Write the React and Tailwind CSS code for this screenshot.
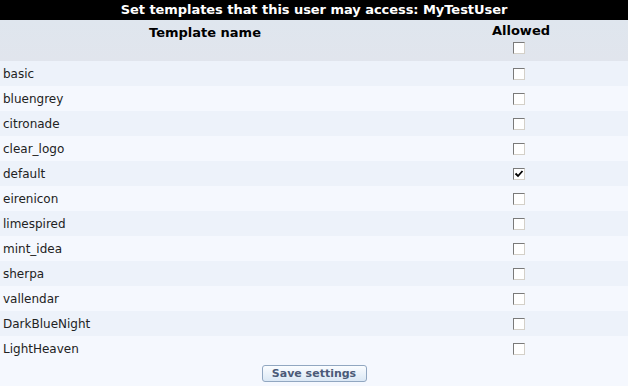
import React, { useState } from 'react';

const templates = [
  'basic',
  'bluengrey',
  'citronade',
  'clear_logo',
  'default',
  'eirenicon',
  'limespired',
  'mint_idea',
  'sherpa',
  'vallendar',
  'DarkBlueNight',
  'LightHeaven',
];

const Box = ({ checked, onClick }) => (
  <span
    onClick={onClick}
    className="relative inline-block w-[12px] h-[12px] bg-white border border-t-[#7a7a7a] border-l-[#7a7a7a] border-r-[#d4d0c8] border-b-[#d4d0c8] cursor-pointer"
  >
    {checked && (
      <svg viewBox="0 0 10 10" className="absolute left-0 top-0 w-[10px] h-[10px]">
        <path d="M1.5 4.5 L4 7 L8.5 2" fill="none" stroke="#000" strokeWidth="1.8" />
      </svg>
    )}
  </span>
);

const App = () => {
  const [allowed, setAllowed] = useState({ default: true });

  const toggle = (name) => setAllowed({ ...allowed, [name]: !allowed[name] });

  return (
    <div className="w-[628px] h-[386px] overflow-hidden bg-[#f5f8fe] text-[#222] font-['DejaVu_Sans',Verdana,sans-serif]">
      {/* Title bar */}
      <div className="h-[20px] bg-black text-white text-[13px] font-bold leading-[20px] text-center tracking-[-0.05px]">
        Set templates that this user may access: MyTestUser
      </div>

      {/* Header */}
      <div className="flex h-[41px] bg-gradient-to-b from-[#dfe6ee] to-[#e1e5ed] text-black text-[13px] font-bold">
        <div className="w-[410px] pt-[5px] leading-[16px] text-center">Template name</div>
        <div className="flex-1 pt-[3px] flex flex-col items-center">
          <span className="leading-[16px] pl-[4px]">Allowed</span>
          <span className="mt-[1px]">
            <Box checked={false} onClick={() => {}} />
          </span>
        </div>
      </div>

      {/* Rows */}
      {templates.map((name, i) => (
        <div
          key={name}
          className={`flex h-[25px] items-center pt-[1px] text-[12px] ${i % 2 === 0 ? 'bg-[#edf2fa]' : 'bg-[#f5f8fe]'}`}
        >
          <div className="w-[410px] pl-[3px]">{name}</div>
          <div className="flex-1 flex justify-center">
            <Box checked={!!allowed[name]} onClick={() => toggle(name)} />
          </div>
        </div>
      ))}

      {/* Footer */}
      <div className="flex justify-center pt-[4px]">
        <button
          type="button"
          className="w-[105px] h-[17px] rounded-[3px] border border-[#91a7c1] bg-gradient-to-b from-[#fbfdff] to-[#dbe8f5] text-[11px] font-bold leading-[15px] text-[#4b5a78] font-['DejaVu_Sans',Verdana,sans-serif]"
        >
          Save settings
        </button>
      </div>
    </div>
  );
};

export default App;
